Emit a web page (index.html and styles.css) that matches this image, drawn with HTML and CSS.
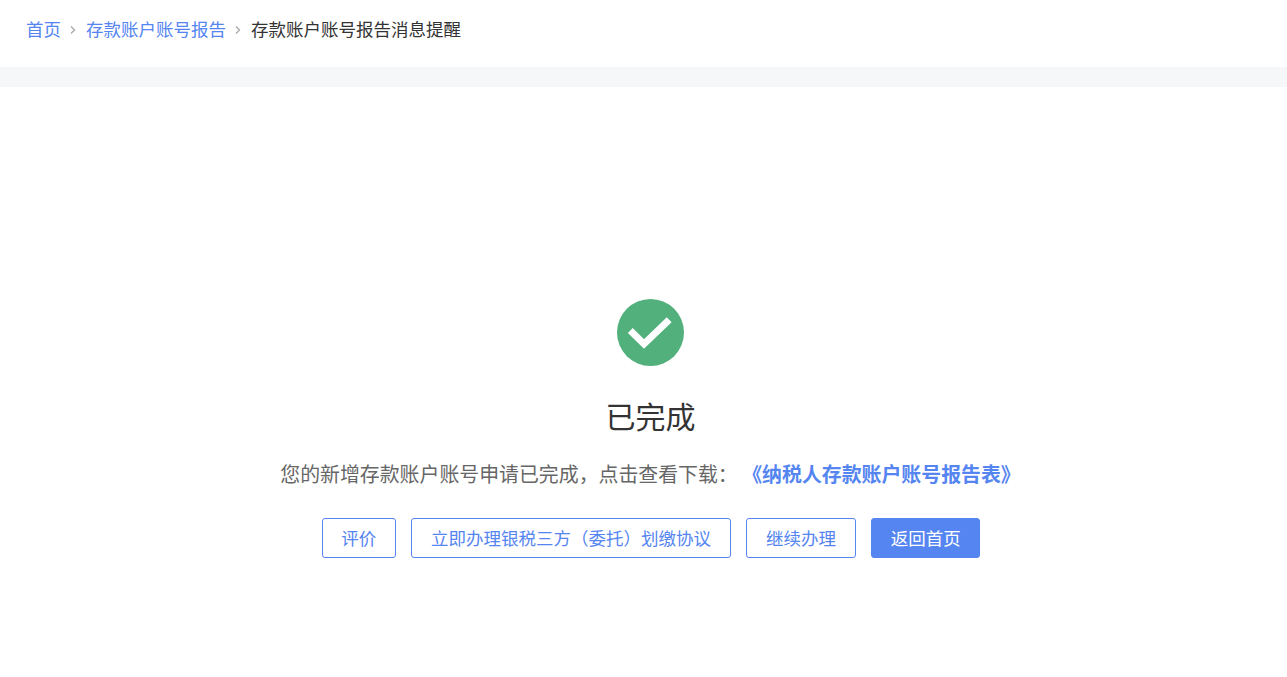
FILE: index.html
```html
<!DOCTYPE html>
<html lang="zh-CN">
<head>
<meta charset="utf-8">
<title>存款账户账号报告消息提醒</title>
<link rel="stylesheet" href="styles.css">
</head>
<body>
<nav class="crumbs">
  <a class="crumb-link">首页</a>
  <svg class="sep" width="8" height="10" viewBox="0 0 8 10"><path d="M2 1.5 5.5 5 2 8.5" fill="none" stroke="#a8a8a8" stroke-width="1.3"/></svg>
  <a class="crumb-link">存款账户账号报告</a>
  <svg class="sep" width="8" height="10" viewBox="0 0 8 10"><path d="M2 1.5 5.5 5 2 8.5" fill="none" stroke="#a8a8a8" stroke-width="1.3"/></svg>
  <span class="crumb-current">存款账户账号报告消息提醒</span>
</nav>
<div class="divider"></div>
<main class="result">
  <svg class="ok" width="67" height="67" viewBox="0 0 67 67">
    <circle cx="33.5" cy="33.5" r="33.5" fill="#52b07c"/>
    <path d="M13.3 31.5 27 45 52.2 20.7" fill="none" stroke="#fff" stroke-width="6.9"/>
  </svg>
  <h1 class="title">已完成</h1>
  <p class="desc">您的新增存款账户账号申请已完成，点击查看下载： <a class="doc">《纳税人存款账户账号报告表》</a></p>
  <div class="actions">
    <button class="btn">评价</button>
    <button class="btn">立即办理银税三方（委托）划缴协议</button>
    <button class="btn">继续办理</button>
    <button class="btn primary">返回首页</button>
  </div>
</main>
</body>
</html>
```
FILE: styles.css
```css
* { box-sizing: border-box; }
html, body { margin: 0; padding: 0; background: #fff; }
body {
  height: 677px;
  overflow: hidden;
  font-family: "Noto Sans CJK SC", "Noto Sans", sans-serif;
  color: #333;
}
.crumbs {
  height: 67px;
  padding: 0 0 10px 26px;
  display: flex;
  align-items: center;
  gap: 8px;
  font-size: 17.5px;
  font-weight: 400;
}
.crumb-link { color: #5585f0; }
.crumb-current { color: #333; }
.sep { margin: 3px 1px 0 0; }
.divider { height: 20px; background: #f6f7f9; }
.result {
  display: flex;
  flex-direction: column;
  align-items: center;
  padding: 212px 0 0 14px;
}
.ok { display: block; }
.title {
  margin: 24px 0 0;
  font-size: 30px;
  line-height: 50px;
  font-weight: 400;
  color: #333;
}
.desc {
  margin: 19px 0 0;
  font-size: 19.9px;
  line-height: 30px;
  font-weight: 400;
  color: #666;
}
.doc { color: #5585f0; font-weight: 700; }
.actions {
  display: flex;
  gap: 15.2px;
  margin: 29px 0 0 1px;
}
.btn {
  height: 40px;
  padding: 0 18.8px 2px;
  border: 1px solid #5585f0;
  border-radius: 3px;
  background: #fff;
  color: #5585f0;
  font: 400 17.5px "Noto Sans CJK SC", sans-serif;
}
.primary { background: #5585f0; color: #fff; }
```
